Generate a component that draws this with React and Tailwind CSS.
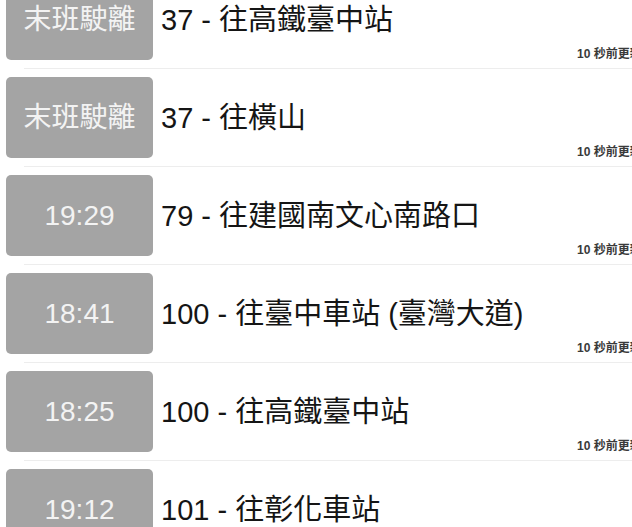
const rows = [
  { badge: "末班駛離", route: "37 - 往高鐵臺中站" },
  { badge: "末班駛離", route: "37 - 往橫山" },
  { badge: "19:29", route: "79 - 往建國南文心南路口" },
  { badge: "18:41", route: "100 - 往臺中車站 (臺灣大道)" },
  { badge: "18:25", route: "100 - 往高鐵臺中站" },
  { badge: "19:12", route: "101 - 往彰化車站" },
];

function Row({ badge, route }) {
  return (
    <div>
      <div className="relative flex items-center pt-[8px] pb-[8px] pl-[6px]">
        <div className="w-[147px] h-[81px] shrink-0 rounded-[5px] bg-[#a4a4a4] flex items-center justify-center text-[28px] text-[#f3f3f3]">
          {badge}
        </div>
        <div className="ml-[8px] mt-[2px] text-[29px] text-[#151515] whitespace-nowrap">{route}</div>
        <div className="absolute left-[577px] bottom-[5px] text-[12px] font-semibold text-[#3a3a3a] whitespace-nowrap">
          10 秒前更新
        </div>
      </div>
      <div className="ml-[24px] h-px bg-[#ededed]" />
    </div>
  );
}

export default function App() {
  return (
    <div
      className="w-[632px] h-[527px] overflow-hidden bg-white"
      style={{ fontFamily: '"Liberation Sans", "Noto Sans CJK TC", sans-serif' }}
    >
      <div className="-mt-[29px]">
        {rows.map((r, i) => (
          <Row key={i} {...r} />
        ))}
      </div>
    </div>
  );
}
